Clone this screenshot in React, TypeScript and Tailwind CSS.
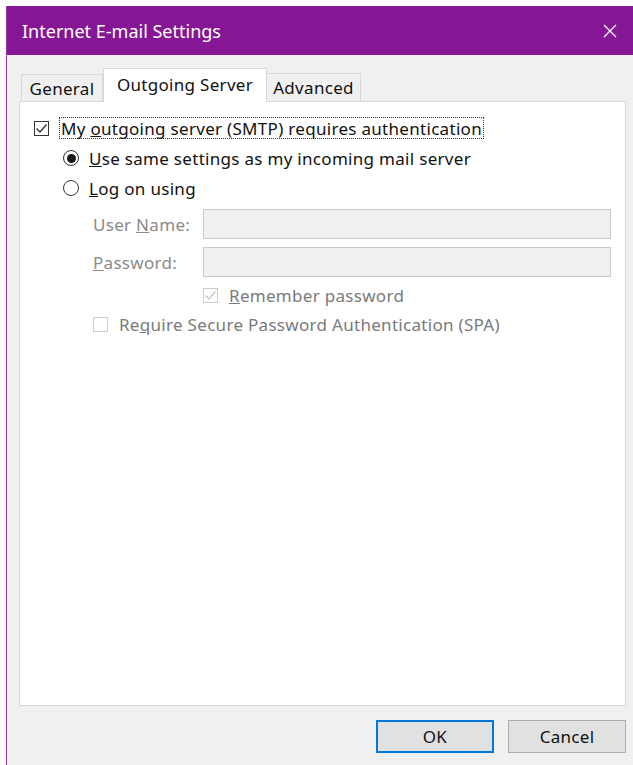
import React from 'react';

function CheckBox({ checked, disabled }: { checked?: boolean; disabled?: boolean }) {
  const edge = disabled ? '#c8c8c8' : '#333333';
  return (
    <span className={`flex h-[15px] w-[15px] shrink-0 items-center justify-center border bg-white ${disabled ? 'border-[#cccccc]' : 'border-[#333333]'}`}>
      {checked && (
        <svg width="13" height="13" viewBox="0 0 13 13">
          <path d="M1.5 6.5 L5 10 L11.5 2.5" fill="none" stroke={edge} strokeWidth="1.4" />
        </svg>
      )}
    </span>
  );
}

function Radio({ checked }: { checked?: boolean }) {
  return (
    <span className="flex h-[16px] w-[16px] shrink-0 items-center justify-center rounded-full border border-[#333333] bg-white">
      {checked && <span className="h-[9px] w-[9px] rounded-full bg-[#1a1a1a]" />}
    </span>
  );
}

function Field({ label, children }: { label: React.ReactNode; children?: React.ReactNode }) {
  return (
    <div className="flex h-[30px] items-center">
      <span className="w-[110px] text-[#8a8a8a]">{label}</span>
      <div className="h-full flex-1 border border-[#c5ccd4] bg-[#f0f0f0]">{children}</div>
    </div>
  );
}

export default function App() {
  return (
    <div className="h-[765px] w-[633px] overflow-hidden bg-white pl-[6px] pt-[6px] font-['Segoe_UI','Noto_Sans',sans-serif] text-[17px] leading-none tracking-[0.3px] text-[#111111]">
      <div className="flex h-full w-[633px] flex-col border-l border-[#9a3aa8] bg-[#f0f0f0]">
        {/* title bar */}
        <div className="flex h-[49px] shrink-0 items-center justify-between bg-[#861794] pl-[15px] pr-[22px] text-[18px] tracking-normal text-white">
          <span>Internet E-mail Settings</span>
          <svg width="14" height="14" viewBox="0 0 14 14">
            <path d="M1 1 L13 13 M13 1 L1 13" stroke="#ffffff" strokeWidth="1.3" />
          </svg>
        </div>

        <div className="flex flex-1 flex-col pl-[12px] pr-[13px] pt-[13px]">
          {/* tabs */}
          <div className="flex h-[33px] items-end pl-[2px]">
            <div className="flex h-[27px] w-[82px] items-center justify-center border border-b-0 border-[#d9d9d9] bg-[#f0f0f0]">General</div>
            <div className="relative z-10 -mb-px flex h-[34px] w-[164px] items-start justify-center border border-b-0 border-[#d9d9d9] bg-white pt-[7px]">Outgoing Server</div>
            <div className="flex h-[28px] w-[94px] items-center justify-center border border-b-0 border-l-0 border-[#d9d9d9] bg-[#f0f0f0]">Advanced</div>
          </div>

          {/* tab page */}
          <div className="flex h-[605px] flex-col border border-[#d9d9d9] bg-white pl-[14px] pr-[14px] pt-[15px]">
            <div className="flex h-[22px] items-center gap-[10px]">
              <CheckBox checked />
              <span className="flex h-[22px] items-center border border-dotted border-[#333333] px-[1px]">
                My&nbsp;<u>o</u>utgoing server (SMTP) requires authentication
              </span>
            </div>

            <div className="mt-[8px] flex h-[22px] items-center gap-[10px] pl-[29px]">
              <Radio checked />
              <span><u>U</u>se same settings as my incoming mail server</span>
            </div>
            <div className="mt-[8px] flex h-[22px] items-center gap-[10px] pl-[29px]">
              <Radio />
              <span><u>L</u>og on using</span>
            </div>

            <div className="mt-[10px] flex flex-col gap-[8px] pl-[59px]">
              <Field label={<>User <u>N</u>ame:</>} />
              <Field label={<><u>P</u>assword:</>} />
            </div>

            <div className="mt-[9px] flex h-[18px] items-center gap-[11px] pl-[169px] text-[#7a7a7a]">
              <CheckBox checked disabled />
              <span><u>R</u>emember password</span>
            </div>
            <div className="mt-[11px] flex h-[18px] items-center gap-[11px] pl-[59px] text-[#7a7a7a]">
              <CheckBox disabled />
              <span>Re<u>q</u>uire Secure Password Authentication (SPA)</span>
            </div>
          </div>

          {/* buttons */}
          <div className="mt-[14px] flex justify-end gap-[14px]">
            <button className="h-[33px] w-[118px] border-2 border-[#0078d7] bg-[#e1e1e1] text-[#111111]">OK</button>
            <button className="h-[33px] w-[118px] border border-[#adadad] bg-[#e1e1e1] text-[#111111]">Cancel</button>
          </div>
        </div>
      </div>
    </div>
  );
}
